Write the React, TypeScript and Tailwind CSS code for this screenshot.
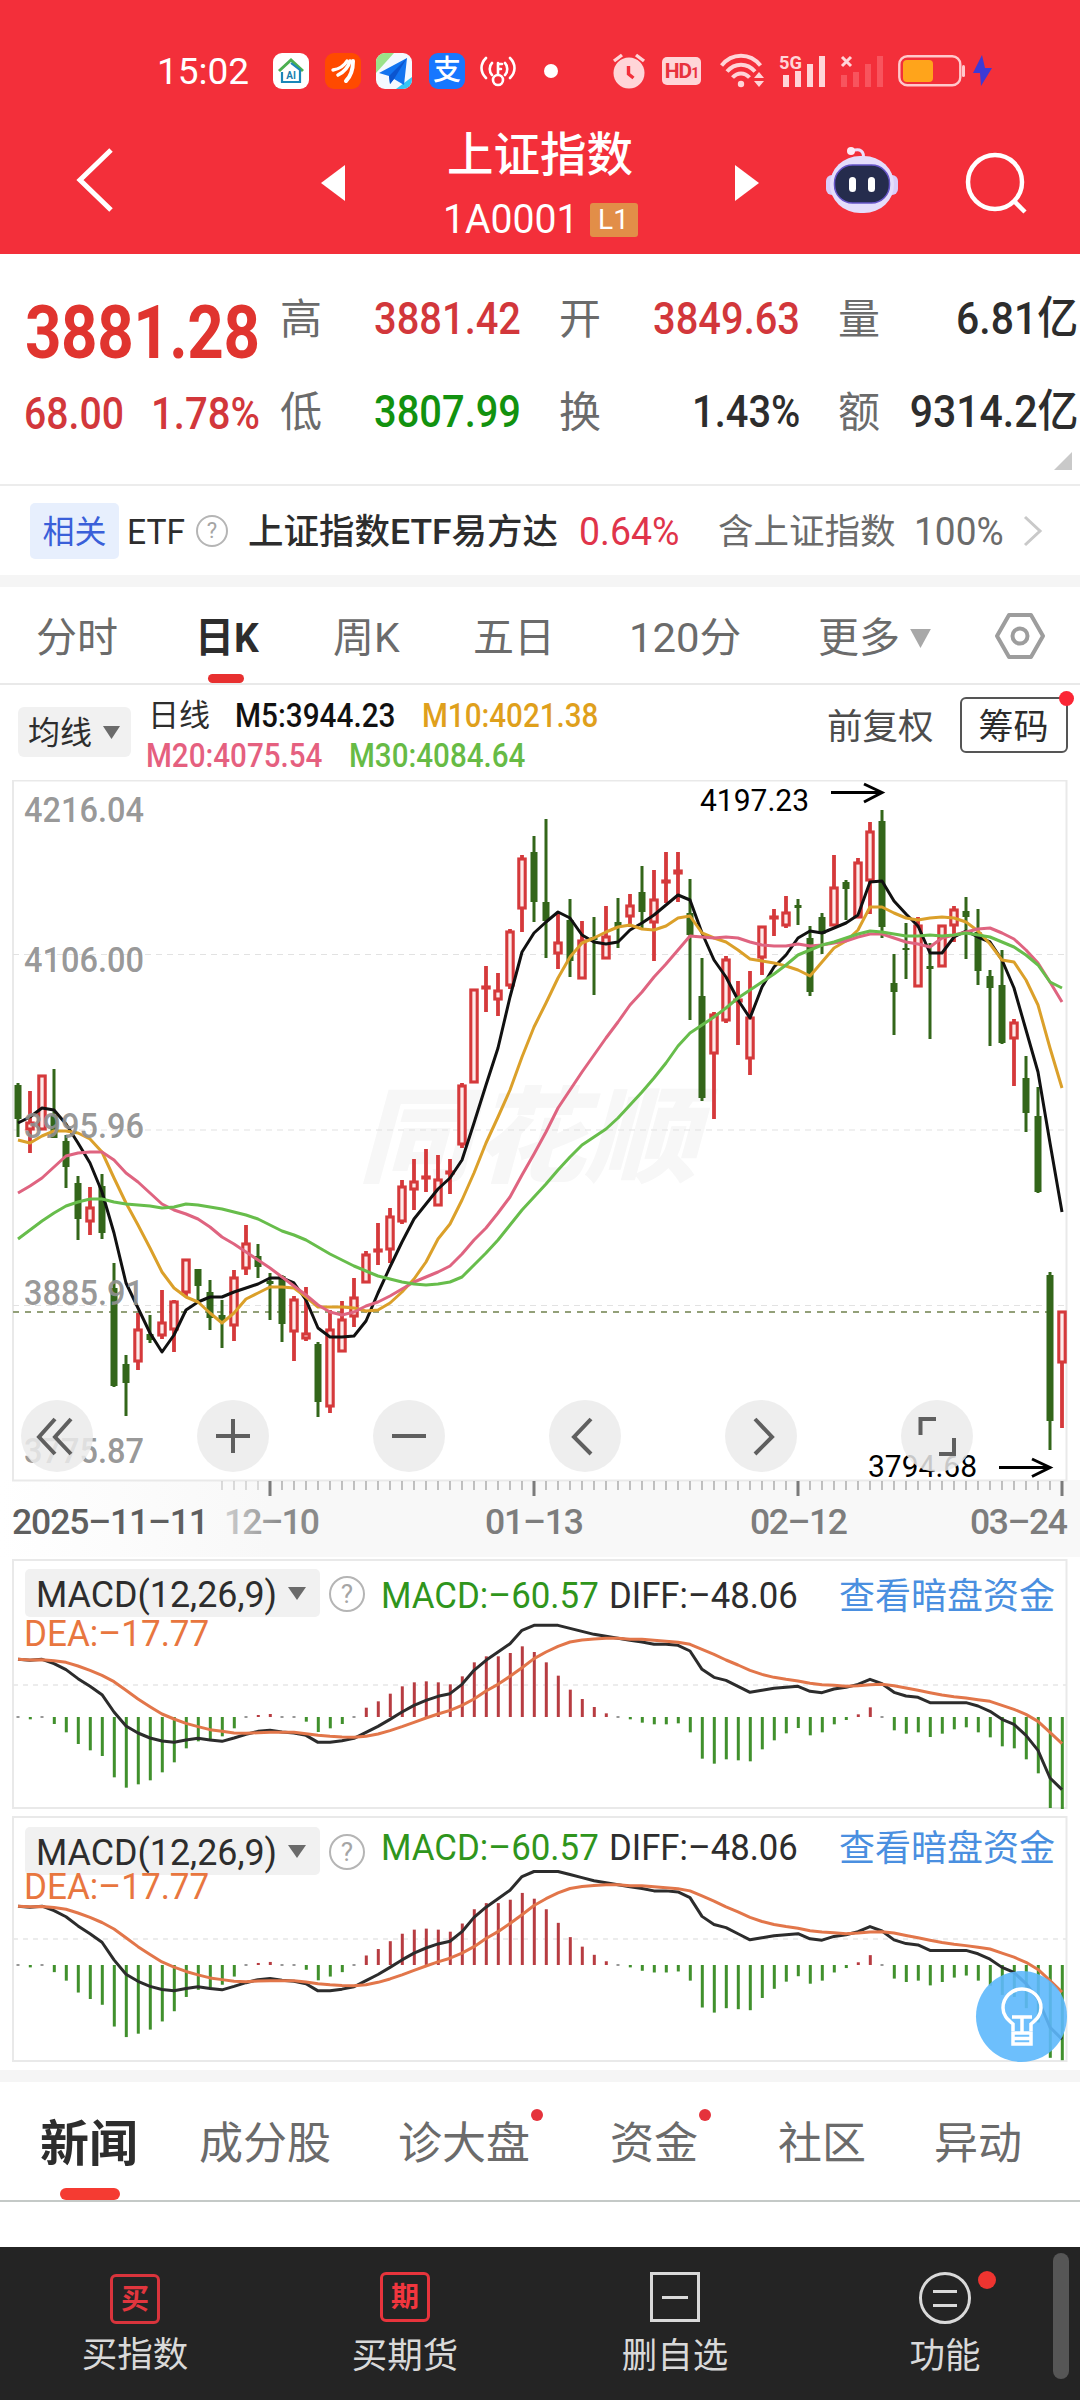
import React from "react";
import clsx from "clsx";

// [up, high, bodyTop, bodyBottom, low] in chart units, one entry per trading day
type Candle = [number, number, number, number, number];

const CANDLES: Candle[] = [
  [0, 1083, 1085, 1119, 1137], [1, 1091, 1123, 1129, 1153], [1, 1075, 1076, 1129, 1130], [0, 1069, 1115, 1138, 1138],
  [0, 1135, 1141, 1167, 1188], [0, 1176, 1183, 1219, 1240], [1, 1187, 1208, 1221, 1235], [0, 1174, 1186, 1233, 1239],
  [0, 1263, 1288, 1386, 1387], [0, 1355, 1364, 1383, 1416], [1, 1313, 1330, 1361, 1370], [0, 1315, 1334, 1340, 1343],
  [1, 1290, 1323, 1335, 1339], [1, 1300, 1302, 1329, 1352], [1, 1259, 1260, 1292, 1297], [0, 1269, 1269, 1286, 1300],
  [0, 1280, 1292, 1318, 1330], [0, 1300, 1315, 1321, 1348], [1, 1270, 1278, 1325, 1341], [1, 1225, 1244, 1268, 1275],
  [0, 1244, 1256, 1267, 1278], [0, 1273, 1281, 1284, 1320], [0, 1275, 1276, 1324, 1342], [1, 1296, 1300, 1331, 1361],
  [1, 1287, 1334, 1338, 1341], [0, 1342, 1344, 1402, 1417], [1, 1310, 1330, 1406, 1413], [1, 1301, 1320, 1351, 1352],
  [1, 1278, 1298, 1316, 1327], [1, 1251, 1255, 1282, 1282], [1, 1223, 1250, 1251, 1265], [1, 1208, 1217, 1249, 1263],
  [1, 1180, 1187, 1221, 1224], [1, 1159, 1182, 1189, 1210], [1, 1149, 1177, 1178, 1192], [1, 1155, 1180, 1205, 1206],
  [1, 1159, 1172, 1173, 1194], [1, 1083, 1086, 1144, 1148], [1, 989, 990, 1082, 1082], [1, 966, 987, 988, 1012],
  [1, 973, 991, 999, 1016], [1, 929, 932, 985, 989], [1, 855, 859, 908, 932], [0, 836, 852, 902, 922],
  [0, 819, 902, 921, 958], [1, 913, 943, 953, 969], [0, 899, 920, 961, 977], [1, 921, 941, 978, 979],
  [0, 917, 937, 940, 995], [1, 906, 937, 958, 959], [0, 898, 922, 927, 948], [1, 894, 906, 916, 927],
  [0, 866, 892, 912, 930], [1, 870, 900, 922, 961], [1, 852, 881, 882, 903], [1, 852, 871, 873, 902],
  [0, 879, 913, 935, 1020], [0, 958, 996, 1098, 1101], [1, 1012, 1015, 1053, 1119], [1, 956, 960, 1020, 1023],
  [1, 981, 1000, 1001, 1045], [1, 971, 1018, 1058, 1075], [1, 926, 927, 957, 975], [1, 909, 917, 918, 936],
  [1, 896, 913, 925, 928], [0, 899, 905, 908, 925], [0, 926, 938, 992, 996], [0, 913, 917, 934, 954],
  [1, 855, 888, 925, 926], [0, 880, 882, 889, 920], [1, 858, 863, 917, 918], [1, 822, 832, 880, 914],
  [0, 810, 821, 927, 938], [0, 954, 983, 992, 1035], [0, 923, 948, 950, 979], [1, 917, 926, 986, 987],
  [0, 943, 966, 969, 1039], [1, 925, 926, 966, 967], [1, 906, 910, 925, 942], [0, 897, 911, 917, 959],
  [0, 909, 932, 971, 985], [0, 970, 976, 988, 1046], [0, 950, 985, 1043, 1044], [1, 1019, 1023, 1038, 1086],
  [0, 1056, 1078, 1113, 1132], [0, 1087, 1116, 1192, 1193], [0, 1272, 1275, 1421, 1450], [1, 1311, 1312, 1362, 1428],
];

const MA5 = [
  1123, 1117, 1108, 1110, 1124, 1143, 1163, 1192, 1233, 1283, 1308, 1333, 1352, 1335, 1310, 1302, 1297, 1297, 1292, 1288,
  1284, 1278, 1278, 1283, 1300, 1328, 1337, 1337, 1336, 1321, 1293, 1267, 1242, 1219, 1204, 1189, 1178, 1160, 1123, 1085,
  1048, 997, 952, 933, 922, 912, 918, 935, 942, 944, 942, 930, 923, 915, 905, 895, 900, 933, 960, 977, 1000, 1018, 987,
  967, 955, 938, 931, 933, 928, 923, 915, 882, 881, 901, 914, 926, 953, 953, 937, 931, 937, 942, 960, 988, 1030, 1072,
  1143, 1212,
];

const MA10 = [
  1140, 1143, 1136, 1131, 1131, 1133, 1139, 1152, 1178, 1203, 1225, 1248, 1272, 1288, 1297, 1302, 1313, 1323, 1313, 1299,
  1293, 1287, 1287, 1288, 1297, 1307, 1307, 1307, 1308, 1311, 1310, 1303, 1292, 1279, 1262, 1239, 1224, 1200, 1173, 1143,
  1117, 1090, 1057, 1027, 1003, 978, 957, 943, 938, 932, 927, 925, 929, 930, 926, 918, 916, 933, 938, 942, 950, 959, 961,
  963, 966, 970, 976, 962, 948, 941, 930, 907, 907, 913, 918, 920, 918, 917, 918, 922, 931, 944, 960, 962, 980, 1005,
  1048, 1088,
];

const MA20 = [
  1193, 1186, 1178, 1167, 1156, 1153, 1152, 1152, 1160, 1173, 1182, 1193, 1204, 1210, 1214, 1219, 1227, 1237, 1244, 1252,
  1260, 1268, 1277, 1286, 1295, 1305, 1312, 1315, 1312, 1306, 1302, 1296, 1289, 1282, 1277, 1272, 1266, 1254, 1240, 1228,
  1213, 1197, 1175, 1154, 1132, 1108, 1090, 1072, 1055, 1038, 1022, 1005, 992, 977, 964, 950, 936, 937, 938, 937, 938,
  942, 945, 946, 946, 944, 946, 945, 943, 941, 937, 934, 934, 938, 942, 944, 947, 938, 935, 932, 929, 928, 933, 939, 950,
  963, 982, 1002,
];

const MA30 = [
  1239, 1230, 1221, 1213, 1206, 1202, 1199, 1199, 1202, 1204, 1205, 1206, 1208, 1207, 1204, 1205, 1207, 1209, 1212, 1215,
  1219, 1225, 1231, 1235, 1240, 1247, 1254, 1260, 1266, 1271, 1276, 1279, 1282, 1284, 1285, 1284, 1282, 1277, 1265, 1253,
  1240, 1225, 1210, 1197, 1184, 1170, 1157, 1145, 1137, 1129, 1118, 1105, 1092, 1078, 1063, 1046, 1033, 1025, 1017, 1008,
  998, 990, 982, 974, 965, 955, 950, 945, 942, 938, 934, 931, 932, 934, 936, 936, 935, 936, 935, 933, 935, 937, 942, 947,
  955, 965, 982, 988,
];

// MACD series, distance above the zero line in thirds of a pixel
const HIST = [
  1, -7, 1, -21, -46, -81, -100, -117, -181, -212, -202, -190, -166, -136, -94, -73, -70, -58, -34, -1, 6, 9, -1, -1, -14,
  -45, -34, -21, -1, 28, 47, 70, 92, 104, 107, 104, 98, 122, 164, 182, 182, 192, 212, 195, 164, 124, 82, 54, 30, 11, -1,
  -7, -17, -22, -22, -19, -46, -125, -140, -127, -130, -133, -97, -70, -49, -33, -55, -46, -22, -9, 8, 29, 1, -40, -50,
  -46, -60, -50, -37, -31, -46, -61, -88, -94, -127, -169, -273, -280,
];

const DIFF = [
  173, 170, 173, 160, 142, 115, 92, 67, 15, -27, -48, -63, -72, -76, -69, -64, -69, -73, -63, -52, -43, -40, -45, -48,
  -55, -76, -76, -71, -64, -46, -28, -7, 15, 35, 50, 62, 70, 98, 140, 170, 195, 220, 260, 275, 275, 275, 266, 257, 248,
  242, 236, 230, 225, 218, 218, 215, 198, 143, 119, 110, 92, 74, 80, 86, 89, 92, 77, 73, 84, 89, 98, 113, 100, 74, 63,
  59, 43, 43, 43, 43, 33, 17, -7, -22, -55, -100, -183, -218,
];

const DEA = [
  173, 171, 172, 169, 164, 153, 140, 125, 106, 80, 54, 31, 9, -6, -19, -29, -38, -43, -48, -49, -47, -46, -46, -46, -50,
  -55, -58, -60, -61, -58, -51, -41, -29, -16, -3, 9, 20, 35, 54, 78, 98, 122, 148, 175, 195, 212, 225, 231, 234, 236,
  236, 233, 233, 230, 227, 224, 218, 203, 188, 171, 156, 140, 128, 119, 113, 108, 101, 97, 95, 92, 94, 97, 98, 94, 87, 80,
  73, 66, 61, 57, 52, 47, 35, 23, 8, -13, -46, -80,
];

const dayX = (i: number) => 18 + i * 12;

const linePoints = (ys: number[]) => ys.map((y, i) => `${dayX(i)},${y}`).join(" ");

function TriangleDown({ className }: { className?: string }) {
  return (
    <svg viewBox="0 0 20 14" preserveAspectRatio="none" className={className} fill="currentColor">
      <path d="M1 0h18L10 14z" />
    </svg>
  );
}

function HelpCircle({ className }: { className?: string }) {
  return (
    <span className={clsx("flex items-center justify-center rounded-full border-2 border-[#b5b5b5] text-[#a5a5a5]", className)}>
      ?
    </span>
  );
}

function StatusIcons() {
  return (
    <>
      <svg className="ml-6 size-9" viewBox="0 0 36 36">
        <rect width="36" height="36" rx="9" fill="#fff" />
        <path d="M6 18 18 7l12 11" fill="none" stroke="#4caf50" strokeWidth="3" />
        <path d="M9 19v10h18V17L18 10" fill="none" stroke="#1a86b8" strokeWidth="2.2" />
        <text x="18" y="26" textAnchor="middle" fontSize="10" fontWeight="700" fill="#1a7fb0" fontFamily="Roboto">AI</text>
      </svg>
      <svg className="ml-4 size-9" viewBox="0 0 36 36">
        <rect width="36" height="36" rx="9" fill="#ff4a00" />
        <g fill="none" stroke="#fff" strokeLinecap="round">
          <path d="M8 17c6-1 11-4 14-9" strokeWidth="3.4" />
          <path d="M13 22c6-3 10-7 12-14" strokeWidth="3.6" />
          <path d="M21 28c5-5 7-12 7-20" strokeWidth="4" />
        </g>
      </svg>
      <svg className="ml-[15px] size-9" viewBox="0 0 36 36">
        <rect width="36" height="36" rx="9" fill="#f4f9ff" />
        <path d="M0 20V9a9 9 0 0 1 9-9h9z" fill="#9be28a" />
        <path d="M20 36l16-12v3a9 9 0 0 1-9 9z" fill="#35c5f5" />
        <path d="M3 20 31 5 28 32 18 26l-4 5-1-8z" fill="#1274f0" />
        <path d="M13 23 31 5 18 26l-4 5z" fill="#0b55cf" />
      </svg>
      <span className="ml-[17px] flex size-9 items-center justify-center rounded-[9px] bg-[#1777ff] text-[28px] leading-none font-medium">支</span>
      <svg className="ml-[15px] h-9 w-9" viewBox="0 0 36 36" fill="none" stroke="#fff" strokeWidth="2.600" strokeLinecap="round">
        <circle cx="18" cy="27" r="5" />
        <path d="M18 21V10M18 11h4M18 16h3" />
        <path d="M12 10c-3 3-3 9 0 12M25 10c3 3 3 9 0 12M6 5c-6 6-6 14 0 20M30 5c6 6 6 14 0 20" />
      </svg>
      <span className="ml-7 size-3.5 rounded-full bg-white" />
      <svg className="ml-[54px] h-[36px] w-[34px]" viewBox="0 0 34 36">
        <circle cx="17" cy="20" r="15.5" fill="#ffd5d8" />
        <path d="M2 8l8-6M32 8l-8-6" stroke="#ffd5d8" strokeWidth="3.400" />
        <path d="M16.500 13v8l5 4" stroke="#f32f3a" strokeWidth="3.400" fill="none" />
      </svg>
      <span className="ml-[16px] flex h-7 w-[39px] items-center justify-center rounded-[5px] bg-[#ffd5d8] text-[21px] leading-none font-bold tracking-[-1px] text-[#e8323d]">
        HD<span className="pt-1 text-sm">1</span>
      </span>
      <svg className="ml-[19px] h-[36px] w-[46px]" viewBox="0 0 46 36" fill="none" stroke="#ffd5d8" strokeWidth="4">
        <path d="M1.500 12.500C12-.5 30-.5 40.500 12.500" />
        <path d="M7 18.500c8-9 20-9 28 0" />
        <path d="M12.500 24.500c5-5.500 12-5.500 17 0" />
        <circle cx="21" cy="31" r="3.200" fill="#ffd5d8" stroke="none" />
        <path d="M34 25l5-6 5 6zM34 28l5 6 5-6z" fill="#ffd5d8" stroke="none" />
      </svg>
      <svg className="ml-[13px] h-[36px] w-[48px] overflow-visible" viewBox="0 0 48 36" fill="#ffd5d8">
        <path d="M4 22h6v12H4zM16 18h6v16h-6zM28 11h6v23h-6zM40 3h6v31h-6z" />
        <text x="0" y="16" fontSize="19" fontWeight="700" textLength="23" lengthAdjust="spacingAndGlyphs" fontFamily="Roboto">5G</text>
      </svg>
      <svg className="ml-[13px] h-[36px] w-[44px]" viewBox="0 0 44 36" fill="#f9616a">
        <path d="M1 22h6v12H1zM13 19h6v15h-6zM25 11h6v23h-6zM37 3h6v31h-6z" opacity=".75" />
        <path d="M2 4l9 9M11 4l-9 9" stroke="#ffd5d8" strokeWidth="3" />
      </svg>
      <svg className="ml-[14px] h-[32px] w-[68px]" viewBox="0 0 68 32">
        <rect x="1.300" y="1.300" width="61" height="29" rx="8" fill="none" stroke="#ffc9cc" strokeWidth="2.400" />
        <rect x="5" y="5" width="30" height="22" rx="4" fill="#ffa41b" />
        <rect x="64" y="10" width="3" height="12" rx="1.500" fill="#ffc9cc" />
      </svg>
      <svg className="ml-[7px] h-[32px] w-[20px]" viewBox="0 0 20 32" fill="#3d3ad6">
        <path d="M9 0 0 18h7l1 13 11-18h-7z" />
      </svg>
    </>
  );
}

function Robot() {
  return (
    <svg className="ml-[66px] h-[68px] w-[74px]" viewBox="0 0 74 68">
      <path d="M27 5c8-3 13 0 11 9" fill="none" stroke="#ecdffc" strokeWidth="3" />
      <circle cx="26" cy="5" r="4" fill="#fdeaf5" />
      <rect x="1" y="29" width="12" height="20" rx="6" fill="#d9cdfa" />
      <rect x="61" y="29" width="12" height="20" rx="6" fill="#d9cdfa" />
      <rect x="5" y="10" width="64" height="57" rx="30" fill="#e4ddfb" />
      <rect x="9.500" y="19" width="55" height="38" rx="18" fill="#252c4d" stroke="#6655c8" strokeWidth="1.500" />
      <rect x="24" y="31" width="7" height="15" rx="3.500" fill="#fff" />
      <rect x="43" y="31" width="7" height="15" rx="3.500" fill="#fff" />
    </svg>
  );
}

function Header() {
  return (
    <header className="flex h-[254px] flex-col bg-[#f32f3a] pt-[49px] text-white">
      <div className="flex h-11 items-center pl-[157px]">
        <span className="w-[92px] text-[37px] leading-none">15:02</span>
        <StatusIcons />
      </div>
      <div className="flex h-[161px] items-center pt-3">
        <svg className="ml-[76px] h-[64px] w-[38px]" viewBox="0 0 38 64" fill="none" stroke="#fff" strokeWidth="5">
          <path d="M35 2 4 32l31 30" />
        </svg>
        <svg className="mt-1.5 ml-[207px] h-9 w-6" viewBox="0 0 24 36" fill="#fff">
          <path d="M24 0v36L0 18z" />
        </svg>
        <div className="mt-2 ml-[88px] flex w-[214px] flex-col items-center gap-6">
          <h1 className="text-[46.500px] leading-[48px] font-medium">上证指数</h1>
          <div className="flex h-[34px] w-[195px] items-center justify-between">
            <span className="w-[136px] text-[41px] leading-none">
              <span className="inline-block origin-left scale-x-[0.955]">1A0001</span>
            </span>
            <span className="flex h-[34px] w-12 items-center justify-center rounded-[3px] bg-[#e28e48] text-[28px] leading-none">L1</span>
          </div>
        </div>
        <svg className="mt-1.5 ml-[88px] h-9 w-6" viewBox="0 0 24 36" fill="#fff">
          <path d="M0 0v36l24-18z" />
        </svg>
        <Robot />
        <svg className="mt-1.5 ml-[66px] h-[62px] w-[62px]" viewBox="0 0 62 62" fill="none" stroke="#fff" strokeWidth="4.500">
          <circle cx="30" cy="30" r="27" />
          <path d="M49 49l11 11" />
        </svg>
      </div>
    </header>
  );
}

interface QuoteCellProps {
  label: string;
  value: string;
  color: string;
  last?: boolean;
}

function QuoteCell({ label, value, color, last }: QuoteCellProps) {
  return (
    <>
      <span className="w-[42px] shrink-0 pt-[3px] text-[42px] leading-none text-[#6b6b6b]">{label}</span>
      <span className={clsx("flex shrink-0 justify-end pt-[1px] text-[45px] leading-none font-medium", color, last ? "w-[198px]" : "mr-[38px] w-[199px]")}>
        <span className={clsx("origin-right whitespace-nowrap", last ? "scale-x-[0.91]" : "scale-x-[0.885]")}>{value}</span>
      </span>
    </>
  );
}

function Quote() {
  return (
    <section className="relative h-[232px] border-b-2 border-[#ececec] bg-white">
      <div className="flex h-32 items-center">
        <div className="w-[280px] shrink-0 pt-[29px] pl-[25px] text-[74px] leading-none font-bold text-[#e0342f]">
          <span className="inline-block origin-left scale-x-[0.86] tracking-[-0.5px]">3881.28</span>
        </div>
        <QuoteCell label="高" value="3881.42" color="text-[#d2373b]" />
        <QuoteCell label="开" value="3849.63" color="text-[#d2373b]" />
        <QuoteCell label="量" value="6.81亿" color="text-[#2d2d2d]" last />
      </div>
      <div className="flex h-[58px] items-center">
        <div className="flex w-[280px] shrink-0 pt-[5px] pl-[24px] text-[44px] leading-none font-medium text-[#d2373b]">
          <span className="w-[127px]">
            <span className="inline-block origin-left scale-x-[0.89]">68.00</span>
          </span>
          <span className="inline-block origin-left scale-x-[0.91]">1.78%</span>
        </div>
        <QuoteCell label="低" value="3807.99" color="text-[#12920f]" />
        <QuoteCell label="换" value="1.43%" color="text-[#2d2d2d]" />
        <QuoteCell label="额" value="9314.2亿" color="text-[#2d2d2d]" last />
      </div>
      <svg className="absolute right-2 bottom-3.5 size-[18px]" viewBox="0 0 18 18" fill="#c9c9c9">
        <path d="M18 0v18H0z" />
      </svg>
    </section>
  );
}

function RelatedEtf() {
  return (
    <section className="flex h-[89px] items-center text-[35.500px] leading-none whitespace-nowrap text-[#2d2d2d]">
      <span className="ml-[30px] flex h-14 w-[89px] items-center justify-center rounded-[5px] bg-[#e7effd] pt-[3px] text-[32px] text-[#3a5fd9]">相关</span>
      <span className="ml-[8px] w-[60px] pt-[3px] text-[35px]">
        <span className="inline-block origin-left scale-x-[0.96]">ETF</span>
      </span>
      <HelpCircle className="ml-[9px] size-[32px] text-[22px]" />
      <span className="ml-[20px] w-[311px] pt-[4px] font-medium">上证指数ETF易方达</span>
      <span className="ml-[20px] w-[101px] pt-[3px] text-[39px] text-[#e0344a]">
        <span className="inline-block origin-left scale-x-[0.96]">0.64%</span>
      </span>
      <span className="ml-[38px] w-[179px] pt-[4px] text-[#6b6b6b]">含上证指数</span>
      <span className="ml-[17px] w-[89px] pt-[3px] text-[39px] text-[#6b6b6b]">
        <span className="inline-block origin-left scale-x-[0.95]">100%</span>
      </span>
      <svg className="ml-[20px] h-[32px] w-[20px]" viewBox="0 0 20 32" fill="none" stroke="#c9c9c9" strokeWidth="3">
        <path d="M2 2l15 14L2 30" />
      </svg>
    </section>
  );
}

function PeriodTabs() {
  return (
    <nav className="relative flex h-[98px] items-center border-b-2 border-[#e9e9e9] pt-[6px] text-[41px] leading-none whitespace-nowrap text-[#6b6b6b]">
      <span className="ml-[36px] w-[159px]">分时</span>
      <span className="w-[138px] font-bold text-[#2d2d2d]">
        <span className="inline-block origin-left scale-x-[0.95]">日K</span>
      </span>
      <span className="w-[140px]">周K</span>
      <span className="w-[156px]">五日</span>
      <span className="w-[189px]">
        <span className="inline-block origin-left scale-x-[1.02]">120分</span>
      </span>
      <span>更多</span>
      <TriangleDown className="ml-[9px] h-[19px] w-[23px] text-[#a8a8a8]" />
      <svg className="-mt-1 ml-[63px] h-[48px] w-[50px]" viewBox="0 0 50 48" fill="none" stroke="#9d9d9d" strokeWidth="4">
        <path d="M14 3h22l12 21-12 21H14L2 24z" strokeLinejoin="round" />
        <circle cx="25" cy="24" r="7.500" />
      </svg>
      <span className="absolute bottom-0 left-[208px] h-[9px] w-9 rounded-full bg-[#e83030]" />
    </nav>
  );
}

function MaBar() {
  return (
    <section className="flex h-[95px] items-start text-[32px] leading-none whitespace-nowrap">
      <span className="mt-[22px] ml-[18px] flex h-[50px] w-[113px] items-center rounded-[6px] bg-[#f1f1f1] pt-[2px] pl-[10px] text-[#2d2d2d]">
        均线
        <TriangleDown className="-mt-0.5 ml-[10px] h-[13px] w-[19px] text-[#6b6b6b]" />
      </span>
      <div className="mt-[14px] ml-[15px] w-[666px] text-[34px]">
        <div className="flex h-[32px] items-center">
          <span className="w-[89px] pl-[2px] text-[31px] text-[#2d2d2d]">日线</span>
          <span className="w-[187px] font-medium text-[#111]">
            <span className="inline-block origin-left scale-x-[0.875]">M5:3944.23</span>
          </span>
          <span className="inline-block origin-left scale-x-[0.87] font-medium text-[#dfa01c]">M10:4021.38</span>
        </div>
        <div className="mt-[8px] flex h-[32px] items-center">
          <span className="w-[203px] font-medium text-[#e5607f]">
            <span className="inline-block origin-left scale-x-[0.87]">M20:4075.54</span>
          </span>
          <span className="inline-block origin-left scale-x-[0.87] font-medium text-[#67bb45]">M30:4084.64</span>
        </div>
      </div>
      <span className="mt-[25px] ml-[15px] text-[35.500px] text-[#4d4d4d]">前复权</span>
      <span className="relative mt-[12px] ml-[26px] flex h-[56px] w-[108px] items-center justify-center rounded-[6px] border-2 border-[#555] pt-[4px] text-[35px] text-[#2d2d2d]">
        筹码
        <span className="absolute -top-[8px] -right-[8px] size-[15px] rounded-full bg-[#fb2635]" />
      </span>
    </section>
  );
}

const PRICE_LABELS = [
  { text: "4216.04", y: 822 },
  { text: "4106.00", y: 972 },
  { text: "3995.96", y: 1138 },
  { text: "3885.91", y: 1305 },
  { text: "3775.87", y: 1463 },
];

const DATE_LABELS = [
  { text: "2025-11-11", x: 12, width: 197, fill: "#5f5f5f" },
  { text: "12-10", x: 224, width: 96, fill: "url(#dateFade)" },
  { text: "01-13", x: 485, width: 99, fill: "#7d7d7d" },
  { text: "02-12", x: 750, width: 98, fill: "#7d7d7d" },
  { text: "03-24", x: 970, width: 98, fill: "#7d7d7d" },
];

function CandleMark({ candle, index }: { candle: Candle; index: number }) {
  const [up, high, top, bottom, low] = candle;
  const x = dayX(index);
  if (!up) {
    return (
      <g fill="#33661a">
        <rect x={x - 1.5} y={high} width="3" height={low - high} />
        <rect x={x - 3.5} y={top} width="7" height={Math.max(bottom - top, 2)} />
      </g>
    );
  }
  return (
    <g stroke="#d5393b">
      <path d={`M${x} ${high}V${top}M${x} ${bottom}V${low}`} strokeWidth="3.800" />
      <rect x={x - 3.2} y={top} width="6.400" height={Math.max(bottom - top, 1)} fill="#fdeaea" strokeWidth="3.100" />
    </g>
  );
}

function ControlIcon({ name }: { name: string }) {
  const paths: Record<string, string> = {
    first: "M34 19 18 37l16 17M50 19 34 37l16 17",
    plus: "M19 36h34M36 19v34",
    minus: "M19 36h34",
    prev: "M42 19 25 37l17 17",
    next: "M30 19l17 18-17 17",
    expand: "M35 19H19.500v16M53 38v16H38",
  };
  return (
    <svg viewBox="0 0 72 72" className="size-[72px]" fill="none" stroke="#5f5f5f" strokeWidth="4">
      <path d={paths[name]} />
    </svg>
  );
}

const CONTROLS = ["first", "plus", "minus", "prev", "next", "expand"];

function KLineChart() {
  return (
    <section className="relative h-[777px]">
      <svg viewBox="0 780 1080 777" className="block h-full w-full" fontFamily="Roboto, 'Noto Sans CJK SC', sans-serif">
        <defs>
          <linearGradient id="axisFade" x1="0" x2="1">
            <stop offset="0" stopColor="#fff" />
            <stop offset="0.250" stopColor="#f8f8f8" />
            <stop offset="1" stopColor="#f8f8f8" />
          </linearGradient>
          <linearGradient id="dateFade" x1="0" x2="1">
            <stop offset="0" stopColor="#d0d0d0" />
            <stop offset="0.600" stopColor="#8a8a8a" />
          </linearGradient>
        </defs>
        <rect x="0" y="1480" width="1080" height="77" fill="url(#axisFade)" />
        <rect x="13" y="780.500" width="1053.500" height="700" fill="#fff" stroke="#e9e9e9" strokeWidth="2" />
        <text x="358" y="1174" fontSize="104" fontWeight="900" fontStyle="italic" fill="#f7f7f7" textLength="340" lengthAdjust="spacingAndGlyphs">
          同花顺
        </text>
        <g stroke="#e2e2e2" strokeWidth="1.200" strokeDasharray="6 5">
          <path d="M13 954.500H1066M13 1130H1066M13 1305.500H1066" />
        </g>
        <path d="M13 1312H1054" stroke="#93a079" strokeWidth="2" strokeDasharray="6 6" />
        {CANDLES.map((candle, i) => (
          <CandleMark key={i} candle={candle} index={i} />
        ))}
        <g fill="none" strokeWidth="3" strokeLinejoin="round">
          <polyline points={linePoints(MA5)} stroke="#111" />
          <polyline points={linePoints(MA10)} stroke="#dba02a" />
          <polyline points={linePoints(MA20)} stroke="#df6480" />
          <polyline points={linePoints(MA30)} stroke="#67bd4b" />
        </g>
        <g fontSize="35" fontWeight="500" fill="#8f8f8f" fillOpacity=".93">
          {PRICE_LABELS.map(({ text, y }) => (
            <text key={text} x="24" y={y} textLength="120" lengthAdjust="spacingAndGlyphs">
              {text}
            </text>
          ))}
        </g>
        <g fontSize="31.500" fill="#000">
          <text x="700" y="811" textLength="109" lengthAdjust="spacingAndGlyphs">4197.23</text>
          <text x="868" y="1476.500" textLength="109" lengthAdjust="spacingAndGlyphs">3794.68</text>
        </g>
        <path d="M831 792.500h51M864 784l18 8.500L864 802M999 1467.500h50M1032 1459l18 8.500-18 9" fill="none" stroke="#000" strokeWidth="3" />
        {CANDLES.map((_, i) =>
          i < 17 ? null : (i - 21) % 22 === 0 ? (
            <path key={i} d={`M${dayX(i)} 1481v15`} stroke="#7b7b7b" strokeWidth="3" />
          ) : (
            <path key={i} d={`M${dayX(i)} 1481v9`} stroke={i < 21 ? "#c4c4c4" : "#9a9a9a"} strokeWidth="1.200" />
          )
        )}
        <g fontSize="35.500" fontWeight="500">
          {DATE_LABELS.map(({ text, x, width, fill }) => (
            <text key={text} x={x} y="1534" fill={fill} textLength={width} lengthAdjust="spacing">
              {text.replace(/-/g, "–")}
            </text>
          ))}
        </g>
      </svg>
      <div className="absolute top-[620px] left-[21px] flex gap-[104px]">
        {CONTROLS.map((name) => (
          <button key={name} className="size-[72px] rounded-full bg-[#ebebeb]/85">
            <ControlIcon name={name} />
          </button>
        ))}
      </div>
    </section>
  );
}

interface MacdPanelProps {
  height: number;
  zero: number;
  grid: number;
  scale: number;
  compact?: boolean;
}

function MacdPanel({ height, zero, grid, scale, compact }: MacdPanelProps) {
  const toY = (v: number) => zero - v * scale;
  return (
    <section className={clsx("relative mx-3", compact ? "mt-[7px] h-[246px]" : "mt-[2px] h-[250px]")}>
      <svg viewBox={`12 0 1056 ${height}`} className="absolute inset-0 h-full w-full">
        <rect x="13" y="1" width="1053.500" height={height - 2} fill="#fff" stroke="#e9e9e9" strokeWidth="2" />
        <path d={`M13 ${grid}H1066`} stroke="#e6e6e6" strokeWidth="1.500" strokeDasharray="5 5" />
        {HIST.map((v, i) => {
          const y = toY(v);
          const x = dayX(i);
          if (Math.abs(v) === 1) return <rect key={i} x={x - 1.5} y={zero - 0.5} width="3" height="1" fill="#333" />;
          return (
            <rect key={i} x={x - 1.2} y={Math.min(y, zero)} width="3" height={Math.abs(y - zero)} fill={v > 0 ? "#b73c41" : "#40902c"} />
          );
        })}
        <g fill="none" strokeWidth="3" strokeLinejoin="round">
          <polyline points={linePoints(DIFF.map(toY))} stroke="#2c2c2c" />
          <polyline points={linePoints(DEA.map(toY))} stroke="#e2764a" />
        </g>
      </svg>
      <div className={clsx("relative flex items-start leading-none whitespace-nowrap", compact ? "pt-[11px]" : "pt-[10px]")}>
        <div className="ml-[13px] flex h-[48px] w-[295px] items-center rounded-[5px] bg-[#f1f1f1] pl-[11px] text-[36px] text-[#2d2d2d]">
          <span className="w-[251px] pt-[4px]">
            <span className="inline-block origin-left scale-x-[0.995]">MACD(12,26,9)</span>
          </span>
          <TriangleDown className="h-[13px] w-[20px] text-[#6b6b6b]" />
        </div>
        <HelpCircle className="mt-[7px] ml-[9px] size-[36px] text-[26px]" />
        <div className={clsx("ml-[16px] flex h-[40px] items-center text-[36.500px]", compact ? "mt-[1px]" : "mt-[7px]")}>
          <span className="w-[228px] text-[#2f951c]">
            <span className="inline-block origin-left scale-x-[0.955]">MACD:–60.57</span>
          </span>
          <span className="w-[230px] text-[#2d2d2d]">
            <span className="inline-block origin-left scale-x-[0.95]">DIFF:–48.06</span>
          </span>
          <span className="pt-[1px] text-[36px] text-[#4a8fe0]">查看暗盘资金</span>
        </div>
      </div>
      <div className={clsx("relative pl-[12px] text-[36.500px] leading-[26px] text-[#e8763f]", compact ? "-mt-[1px]" : "mt-[4px]")}>
        <span className="inline-block origin-left scale-x-[0.96]">DEA:–17.77</span>
      </div>
      {compact && (
        <span className="absolute right-[1px] bottom-0 flex size-[91px] items-center justify-center rounded-full bg-[#5db8fc]/90">
          <svg className="h-[60px] w-[48px]" viewBox="0 0 48 60" fill="none" stroke="#fff" strokeWidth="3.500">
            <path d="M15 44v-7c-6-5-10-9-10-16a19 19 0 0 1 38 0c0 7-4 11-10 16v7" />
            <path d="M14 30h20M24 30v16M15 46h18v11H15zM15 51.500h18" />
          </svg>
        </span>
      )}
    </section>
  );
}

const NEWS_TABS = [
  { label: "成分股", dot: false, className: "ml-[61px]" },
  { label: "诊大盘", dot: true, className: "ml-[67px]" },
  { label: "资金", dot: true, className: "ml-[80px]" },
  { label: "社区", dot: false, className: "ml-[80px]" },
  { label: "异动", dot: false, className: "ml-[68px]" },
];

function NewsTabs() {
  return (
    <nav className="relative flex h-[120px] items-center border-b-2 border-[#c4c9c7] pt-[6px] text-[44px] leading-none whitespace-nowrap text-[#6b6b6b]">
      <span className="ml-[40px] text-[49px] font-bold text-[#2d2d2d]">新闻</span>
      {NEWS_TABS.map(({ label, dot, className }) => (
        <span key={label} className={clsx("relative", className)}>
          {label}
          {dot && <span className="absolute -top-[13px] -right-[13px] size-3 rounded-full bg-[#e5333c]" />}
        </span>
      ))}
      <span className="absolute bottom-0 left-[60px] h-[12px] w-[60px] rounded-full bg-[#f53b32]" />
    </nav>
  );
}

function BottomBar() {
  return (
    <footer className="relative flex h-[153px] bg-[#242424] text-[35.500px] leading-none text-[#d9d9d9]">
      <div className="flex w-[270px] flex-col items-center pt-[27px]">
        <span className="flex size-[50px] items-center justify-center rounded-[6px] border-3 border-[#d9343c] pt-[2px] text-[28px] font-bold text-[#e2363e]">买</span>
        <span className="mt-[14px]">买指数</span>
      </div>
      <div className="flex w-[270px] flex-col items-center pt-[25px]">
        <span className="flex size-[50px] items-center justify-center rounded-[6px] border-3 border-[#e8343c] pt-[2px] text-[28px] font-bold text-[#f2363e]">期</span>
        <span className="mt-[17px]">买期货</span>
      </div>
      <div className="flex w-[270px] flex-col items-center pt-[25px]">
        <span className="flex size-[50px] items-center justify-center border-3 border-[#d9d9d9]">
          <span className="h-[3px] w-[26px] bg-[#d9d9d9]" />
        </span>
        <span className="mt-[17px]">删自选</span>
      </div>
      <div className="flex w-[270px] flex-col items-center pt-[25px]">
        <span className="relative flex size-[52px] flex-col items-center justify-center gap-[11px] rounded-full border-3 border-[#d9d9d9]">
          <span className="h-[3px] w-[24px] bg-[#d9d9d9]" />
          <span className="h-[3px] w-[24px] bg-[#d9d9d9]" />
          <span className="absolute -top-[4px] -right-[28px] size-[18px] rounded-full bg-[#ee3430]" />
        </span>
        <span className="mt-[15px]">功能</span>
      </div>
      <span className="absolute top-[6px] right-[11px] h-[126px] w-[16px] rounded-full bg-[#565656]" />
    </footer>
  );
}

export default function App() {
  return (
    <div className="flex h-[2400px] w-[1080px] flex-col overflow-hidden bg-white font-[Roboto,'Noto_Sans_CJK_SC',sans-serif]">
      <Header />
      <Quote />
      <RelatedEtf />
      <div className="h-3 bg-[#f5f5f5]" />
      <PeriodTabs />
      <MaBar />
      <KLineChart />
      <MacdPanel height={250} zero={158} grid={126} scale={1 / 3} />
      <MacdPanel height={246} zero={149} grid={123} scale={0.34} compact />
      <div className="mt-[8px] h-3 bg-[#f5f5f5]" />
      <NewsTabs />
      <div className="flex-1" />
      <BottomBar />
    </div>
  );
}
